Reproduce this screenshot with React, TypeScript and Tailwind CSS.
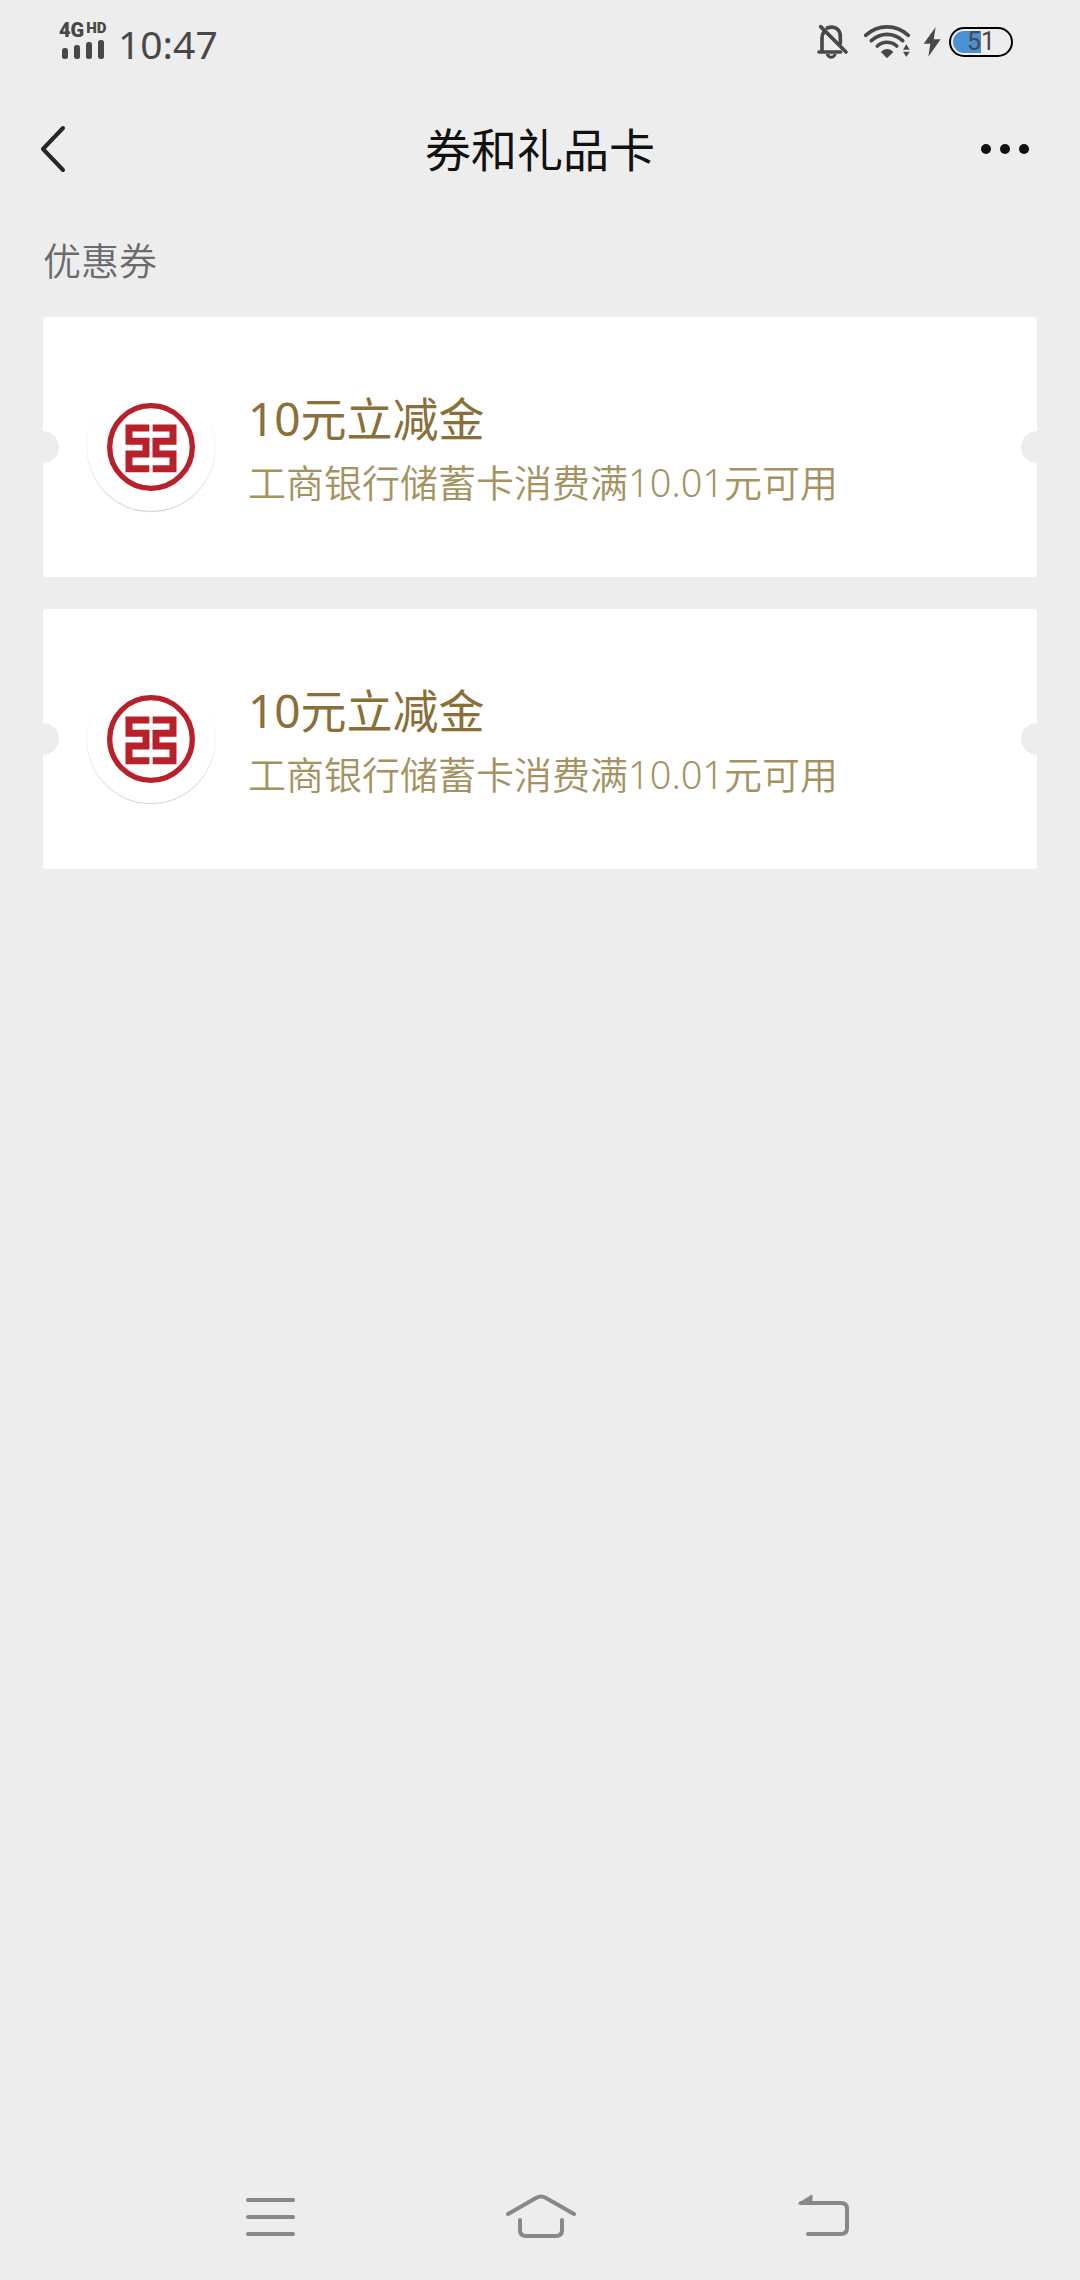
import React from "react";

const coupons = [
  { id: 1, title: "10元立减金", detail: "工商银行储蓄卡消费满10.01元可用" },
  { id: 2, title: "10元立减金", detail: "工商银行储蓄卡消费满10.01元可用" },
];

function StatusBar() {
  return (
    <div className="flex h-[84px] items-center justify-between pr-[67px] pl-[59px] text-[#484848]">
      <div className="flex items-center gap-[12px]">
        <div className="flex w-[47px] flex-col">
          <div className="flex h-[18px] items-start gap-[2px] font-['Roboto',sans-serif] font-black">
            <span className="text-[20px] leading-[16px]">4G</span>
            <span className="text-[15px] leading-[12px]">HD</span>
          </div>
          <svg className="h-[22px] w-[46px]" viewBox="0 0 46 22" fill="currentColor" aria-hidden="true">
            <rect x="3" y="8" width="6" height="11" rx="2.5" />
            <rect x="15" y="5" width="6" height="14" rx="2.5" />
            <rect x="27" y="2" width="6" height="17" rx="2.5" />
            <rect x="39" y="0" width="6" height="19" rx="2.5" />
          </svg>
        </div>
        <time className="pt-[3px] font-['Noto_Sans',sans-serif] text-[39px] leading-[48px]">10:47</time>
      </div>
      <div className="flex items-center">
        <svg className="mr-[14px] h-[36px] w-[33px]" viewBox="48 42 99 108" fill="none" stroke="currentColor" strokeWidth="11" strokeLinecap="round" aria-hidden="true">
          <path d="M66 124V84C66 77 68 71 71 67M82 54C104 46 121 58 121 80V100" />
          <path d="M57 126H122" />
          <path d="M62 50L138 126" />
          <path d="M77 132H110C106 151 81 151 77 132Z" fill="currentColor" stroke="none" />
          <path d="M87 133H101C97 139 91 139 87 133Z" fill="#ededed" stroke="none" />
        </svg>
        <svg className="mr-[12px] h-[36px] w-[48px]" viewBox="189 42 144 108" fill="none" stroke="currentColor" strokeWidth="11" strokeLinecap="round" aria-hidden="true">
          <path d="M197 76C234 42 288 42 325 76" />
          <path d="M214 92C242 67 280 67 308 92" />
          <path d="M232 108C249 93 273 93 290 108" />
          <path d="M243 126C253 114 270 114 280 126L264 142Q261 145 258 142Z" fill="currentColor" stroke="none" />
          <path d="M309 119L319 103L329 119ZM309 125H329L319 141Z" fill="currentColor" stroke="none" />
        </svg>
        <svg className="mr-[8px] h-[36px] w-[18px]" viewBox="369 42 54 108" fill="currentColor" aria-hidden="true">
          <path d="M407 51L371 101H391L385 140L422 88H401Z" />
        </svg>
        <div className="relative flex h-[30px] w-[64px] items-center justify-center rounded-full border-2 border-black p-[2px]">
          <div className="mr-auto h-full w-[50%] rounded-l-full bg-[#4a90d2]" />
          <span className="absolute font-['Roboto',sans-serif] text-[25px] leading-[26px] font-normal">51</span>
        </div>
      </div>
    </div>
  );
}

function Header() {
  return (
    <header className="grid h-[130px] grid-cols-[1fr_auto_1fr] items-center px-[40px]">
      <button type="button" aria-label="返回" className="justify-self-start">
        <svg className="h-[48px] w-[26px]" viewBox="0 0 26 48" fill="none" stroke="#262626" strokeWidth="4" strokeLinecap="round" strokeLinejoin="round">
          <path d="M23 3L3 24L23 45" />
        </svg>
      </button>
      <h1 className="text-[46px] leading-[60px] font-normal text-[#111111]">券和礼品卡</h1>
      <button type="button" aria-label="更多" className="justify-self-end">
        <svg className="h-[20px] w-[60px]" viewBox="0 0 60 20" fill="#111111">
          <circle cx="6" cy="10" r="5" />
          <circle cx="25" cy="10" r="5" />
          <circle cx="44" cy="10" r="5" />
        </svg>
      </button>
    </header>
  );
}

function BankLogo() {
  return (
    <div className="flex size-[128px] shrink-0 items-center justify-center rounded-full bg-white shadow-[0_1px_1px_rgba(0,0,0,0.18)]">
      <svg className="size-[90px]" viewBox="228 306 270 270" fill="none" stroke="#b8202a" role="img" aria-label="工商银行">
        <circle cx="363" cy="441" r="124" strokeWidth="16" />
        <g strokeWidth="21">
          <path d="M358 384H297V424H348V462H297V506H358" />
          <path d="M368 384H429V424H378V462H429V506H368" />
        </g>
      </svg>
    </div>
  );
}

function Coupon({ title, detail }: { title: string; detail: string }) {
  return (
    <li className="relative flex h-[260px] items-center gap-[33px] overflow-hidden rounded-[3px] bg-white pl-[44px]">
      <span className="absolute top-1/2 -left-4 size-8 -translate-y-1/2 rounded-full bg-[#ededed]" />
      <span className="absolute top-1/2 -right-4 size-8 -translate-y-1/2 rounded-full bg-[#ededed]" />
      <BankLogo />
      <div className="pb-[3px]">
        <h3 className="text-[46px] leading-[72px] font-normal text-[#8a7038]">{title}</h3>
        <p className="text-[38px] leading-[56px] font-[350] text-[#a5935f]">{detail}</p>
      </div>
    </li>
  );
}

function NavBar() {
  return (
    <nav className="mt-auto grid h-[126px] grid-cols-3 items-center px-[135px] text-[#888888]">
      <button type="button" aria-label="最近任务" className="justify-self-center">
        <svg className="h-[48px] w-[50px]" viewBox="0 0 50 48" fill="none" stroke="currentColor" strokeWidth="4" strokeLinecap="round">
          <path d="M3 7H48M3 24H48M3 41H48" />
        </svg>
      </button>
      <button type="button" aria-label="主屏幕" className="justify-self-center">
        <svg className="h-[48px] w-[72px]" viewBox="0 0 72 48" fill="none" stroke="currentColor" strokeWidth="4" strokeLinecap="round" strokeLinejoin="round">
          <path d="M4 21L32 5Q37 2 42 5L70 21" />
          <path d="M16 27V37Q16 43 22 43H52Q58 43 58 37V27" />
        </svg>
      </button>
      <button type="button" aria-label="返回上一级" className="justify-self-center">
        <svg className="h-[48px] w-[78px]" viewBox="0 0 78 48" fill="none" stroke="currentColor" strokeWidth="4" strokeLinecap="round">
          <path d="M30 10H70Q76 10 76 16V35Q76 41 70 41H37" />
          <path d="M28 10L41 2V11H28Z" fill="currentColor" strokeWidth="1" strokeLinejoin="round" />
        </svg>
      </button>
    </nav>
  );
}

export default function App() {
  return (
    <div className="flex min-h-screen flex-col bg-[#ededed] font-['Noto_Sans','Noto_Sans_CJK_SC',sans-serif]">
      <StatusBar />
      <Header />
      <main className="px-[43px]">
        <h2 className="pt-[16px] text-[38px] leading-[60px] font-[350] text-[#6b6b6b]">优惠券</h2>
        <ul className="mt-[27px] flex flex-col gap-8">
          {coupons.map((c) => (
            <Coupon key={c.id} title={c.title} detail={c.detail} />
          ))}
        </ul>
      </main>
      <NavBar />
    </div>
  );
}
